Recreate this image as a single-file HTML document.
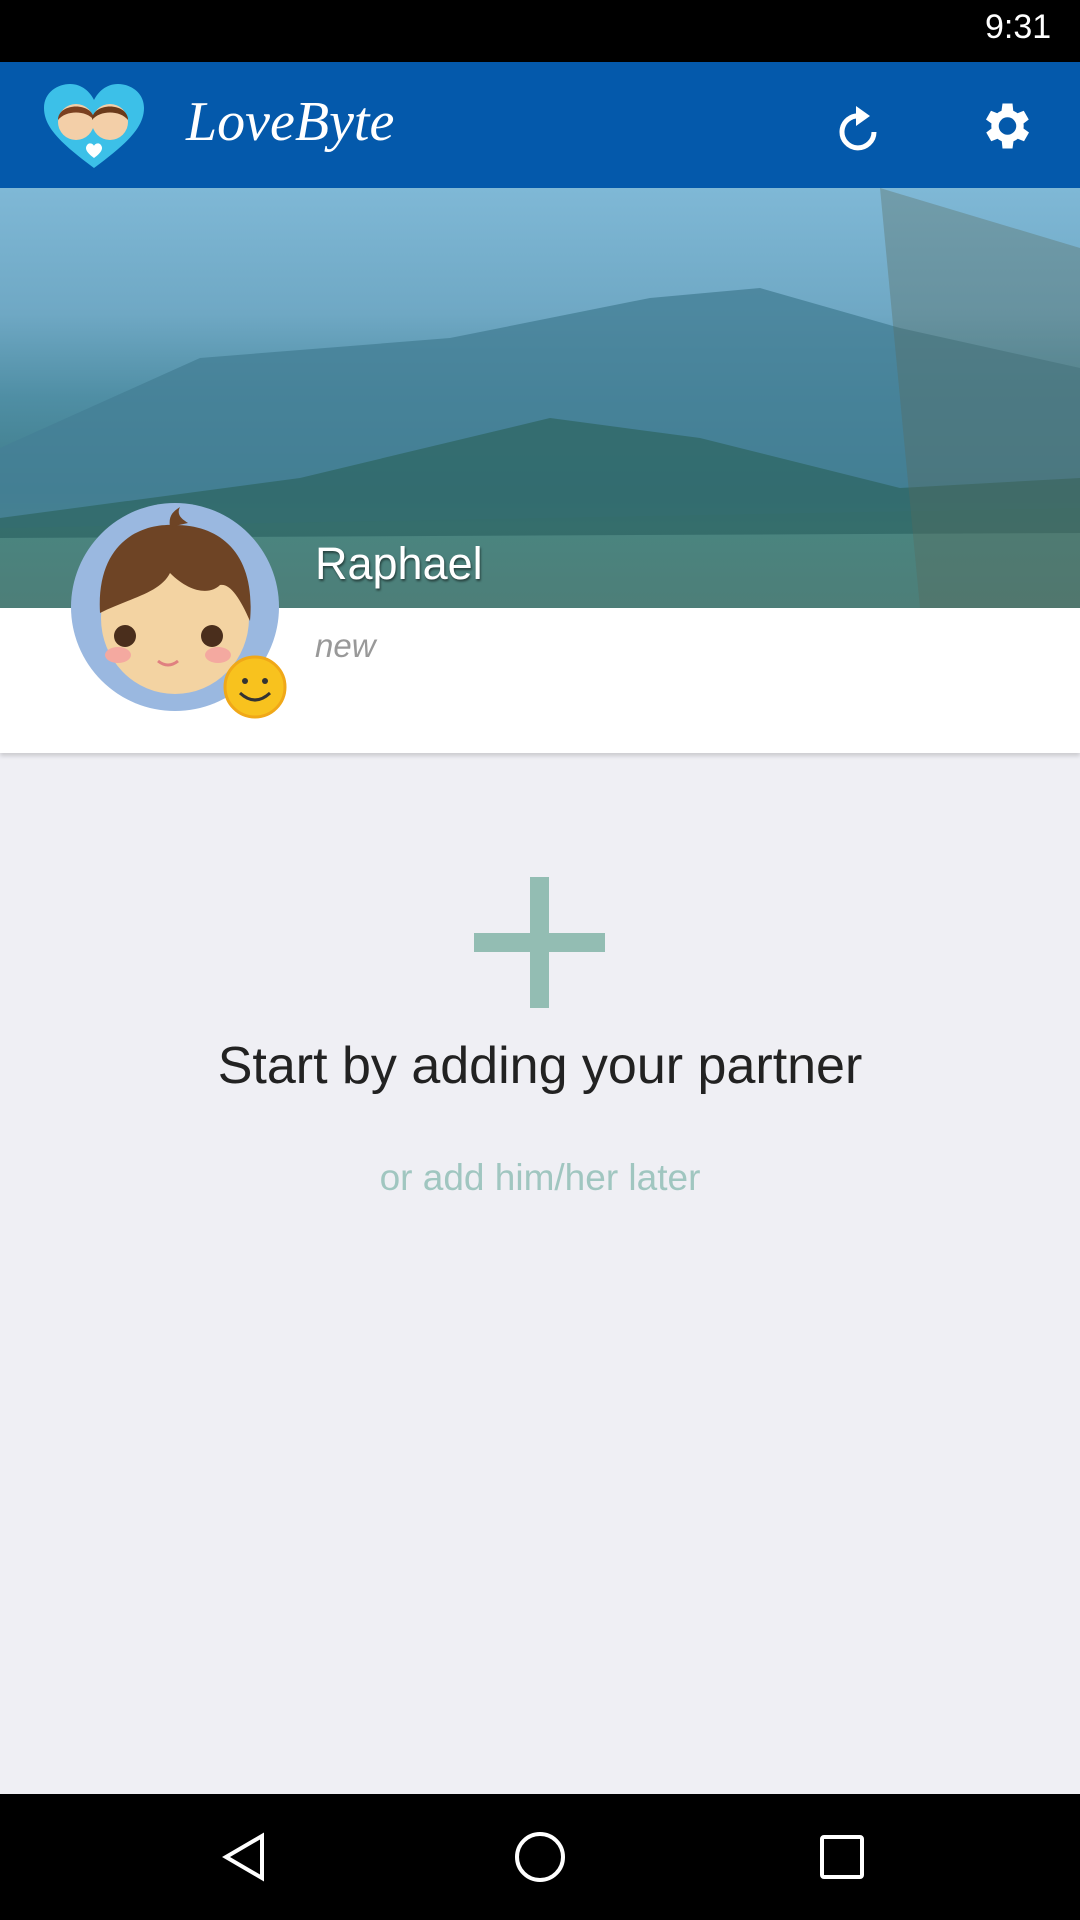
<!DOCTYPE html>
<html><head><meta charset="utf-8"><style>
body{margin:0;width:1080px;height:1920px;background:#efeff4;font-family:"Liberation Sans",sans-serif;position:relative;overflow:hidden}
.abs{position:absolute}
</style></head><body>
<div class="abs" style="left:0;top:0;width:1080px;height:62px;background:#000"></div>
<div class="abs" style="left:0;top:62px;width:1080px;height:126px;background:#0459ab"></div>
<svg class="abs" style="left:42px;top:84px" width="104" height="86" viewBox="0 0 104 86"><path d="M52 84 C20 60 2 44 2 24 C2 8 16 0 28 0 C40 0 48 8 52 16 C56 8 64 0 76 0 C88 0 102 8 102 24 C102 44 84 60 52 84Z" fill="#3cc0e8"/><circle cx="34" cy="38" r="18" fill="#f3cfa8"/><path d="M16 36 C16 18 52 18 52 36 C44 26 24 26 16 36Z" fill="#7a4020"/><circle cx="68" cy="38" r="18" fill="#f3cfa8"/><path d="M50 36 C50 18 86 18 86 36 C78 26 58 26 50 36Z" fill="#6a3a1a"/><path d="M52 74 C44 68 42 64 46 60 C49 58 52 61 52 62 C52 61 55 58 58 60 C62 64 60 68 52 74Z" fill="#fff"/></svg>
<div class="abs" style="left:186px;top:90px;color:#fff;font-family:'Liberation Serif',serif;font-style:italic;font-size:56px">LoveByte</div>
<svg class="abs" style="left:834px;top:98px" width="52" height="56" viewBox="0 0 52 56"><path d="M40 34 A16 16 0 1 1 26 18" fill="none" stroke="#fff" stroke-width="5"/><path d="M22 8 L36 18 L22 28Z" fill="#fff"/></svg>
<svg class="abs" style="left:975px;top:96px" width="60" height="60" viewBox="0 0 24 24"><path fill="#fff" d="M19.4 13a7.5 7.5 0 0 0 0-2l2.1-1.6-2-3.5-2.5 1a7 7 0 0 0-1.7-1L15 3h-4l-.4 2.9a7 7 0 0 0-1.7 1l-2.5-1-2 3.5L6.6 11a7.5 7.5 0 0 0 0 2l-2.1 1.6 2 3.5 2.5-1a7 7 0 0 0 1.7 1L11 21h4l.4-2.9a7 7 0 0 0 1.7-1l2.5 1 2-3.5zM13 15.5A3.5 3.5 0 1 1 13 8.5a3.5 3.5 0 0 1 0 7z"/></svg>
<div class="abs" style="left:0;top:188px;width:1080px;height:420px;background:linear-gradient(180deg,#7fb8d6 0%,#6fa8c4 30%,#4f8ea4 50%,#3e7c88 72%,#4a8580 80%,#4d7e78 100%)"></div>
<svg class="abs" style="left:0;top:188px" width="1080" height="420"><path d="M0 260 L200 170 L450 150 L650 110 L760 100 L900 140 L1080 180 L1080 320 L0 340Z" fill="#457f96" opacity=".8"/><path d="M0 330 L300 290 L550 230 L700 250 L900 300 L1080 290 L1080 345 L0 350Z" fill="#2f6866" opacity=".8"/><path d="M880 0 L1080 60 L1080 420 L920 420Z" fill="#5a6a5c" opacity=".35"/></svg>
<div class="abs" style="left:0;top:608px;width:1080px;height:145px;background:#fff;box-shadow:0 3px 4px rgba(0,0,0,.15)"></div>
<svg class="abs" style="left:70px;top:503px" width="220" height="220" viewBox="0 0 220 220"><circle cx="105" cy="104" r="104" fill="#9ab8e0"/><ellipse cx="105" cy="115" rx="74" ry="76" fill="#f3d3a2"/><path d="M30 110 C26 40 70 20 105 22 C150 22 186 50 180 118 C170 95 160 80 150 82 C140 92 120 90 100 70 C90 90 60 95 30 110Z" fill="#6e4425"/><path d="M100 24 C98 12 104 8 110 4 C106 12 112 16 118 20Z" fill="#6e4425"/><circle cx="55" cy="133" r="11" fill="#4a2e1c"/><circle cx="142" cy="133" r="11" fill="#4a2e1c"/><ellipse cx="48" cy="152" rx="13" ry="8" fill="#f4a9a0"/><ellipse cx="148" cy="152" rx="13" ry="8" fill="#f4a9a0"/><path d="M88 158 Q98 166 108 158" stroke="#e08080" stroke-width="3" fill="none"/><circle cx="185" cy="184" r="30" fill="#f8c21e" stroke="#f0a818" stroke-width="3"/><circle cx="175" cy="178" r="3" fill="#333"/><circle cx="195" cy="178" r="3" fill="#333"/><path d="M170 190 Q185 204 200 190" stroke="#333" stroke-width="3" fill="none"/></svg>
<div class="abs" style="left:315px;top:538px;color:#fff;font-size:45px;text-shadow:1px 2px 2px rgba(0,0,0,.5)">Raphael</div>
<div class="abs" style="left:315px;top:627px;color:#999;font-size:33px;font-style:italic">new</div>
<div class="abs" style="left:474px;top:933px;width:131px;height:19px;background:#93bdb3"></div>
<div class="abs" style="left:530px;top:877px;width:19px;height:131px;background:#93bdb3"></div>
<div class="abs" style="left:0;top:1036px;width:1080px;text-align:center;font-size:52px;color:#222">Start by adding your partner</div>
<div class="abs" style="left:0;top:1157px;width:1080px;text-align:center;font-size:37px;color:#a0c6c0">or add him/her later</div>
<div class="abs" style="left:0;top:1794px;width:1080px;height:126px;background:#000"></div>
<svg class="abs" style="left:0;top:1794px" width="1080" height="126"><path d="M262 42 L262 84 L226 63Z" fill="none" stroke="#fff" stroke-width="4"/><circle cx="540" cy="63" r="23" fill="none" stroke="#fff" stroke-width="4"/><rect x="822" y="43" width="40" height="40" rx="2" fill="none" stroke="#fff" stroke-width="4"/></svg>
<div class="abs" style="left:985px;top:8px;color:#fff;font-size:34px">9:31</div>
</body></html>
